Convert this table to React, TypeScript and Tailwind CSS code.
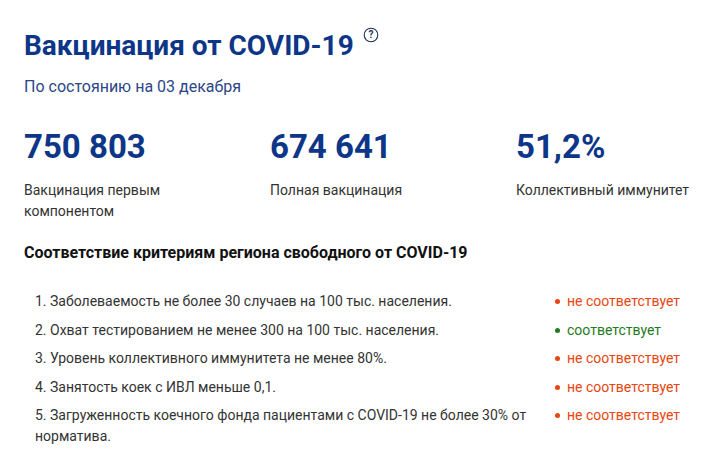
import React from "react";

const stats = [
  { value: "750 803", label: "Вакцинация первым компонентом" },
  { value: "674 641", label: "Полная вакцинация" },
  { value: "51,2%", label: "Коллективный иммунитет" },
];

const criteria = [
  { text: "1. Заболеваемость не более 30 случаев на 100 тыс. населения.", ok: false },
  { text: "2. Охват тестированием не менее 300 на 100 тыс. населения.", ok: true },
  { text: "3. Уровень коллективного иммунитета не менее 80%.", ok: false },
  { text: "4. Занятость коек с ИВЛ меньше 0,1.", ok: false },
  {
    text: "5. Загруженность коечного фонда пациентами с COVID-19 не более 30% от норматива.",
    ok: false,
  },
];

function HelpIcon() {
  return (
    <svg width="16" height="16" viewBox="0 0 16 16" className="ml-[9px] mt-[-2px] shrink-0">
      <circle cx="8" cy="8" r="6.8" fill="none" stroke="#1f2f5c" strokeWidth="1.1" />
      <text
        x="8"
        y="11.4"
        textAnchor="middle"
        fontSize="10"
        fontWeight="700"
        fill="#1f2f5c"
        fontFamily="Roboto, sans-serif"
      >
        ?
      </text>
    </svg>
  );
}

export default function App() {
  return (
    <div className="w-[721px] h-[473px] bg-white overflow-hidden pl-[24px] pt-[29px] font-['Roboto',sans-serif]">
      <div className="flex items-start">
        <h1 className="text-[28px] leading-[34px] font-bold text-[#0d3688]">Вакцинация от COVID-19</h1>
        <HelpIcon />
      </div>
      <p className="mt-[14px] text-[16px] leading-[20px] text-[#2c4688]">По состоянию на 03 декабря</p>

      <div className="mt-[30px] flex gap-[46px]">
        {stats.map((s) => (
          <div key={s.value} className="w-[200px]">
            <div className="text-[33px] leading-[40px] font-bold text-[#0d3688]">{s.value}</div>
            <div className="mt-[13px] text-[14px] leading-[21px] text-[#333]">{s.label}</div>
          </div>
        ))}
      </div>

      <h2 className="mt-[21px] text-[16px] leading-[20px] font-bold text-[#111]">
        Соответствие критериям региона свободного от COVID-19
      </h2>

      <ul className="mt-[28px] pl-[11px] flex flex-col gap-[7.5px]">
        {criteria.map((c) => (
          <li key={c.text} className="flex text-[14px] leading-[21px]">
            <span className="w-[510px] text-[#333]">{c.text}</span>
            <span
              className={
                "ml-[10px] flex items-start " + (c.ok ? "text-[#1f7a22]" : "text-[#e8450f]")
              }
            >
              <span
                className={
                  "mt-[8px] mr-[7px] w-[5px] h-[5px] rounded-full " +
                  (c.ok ? "bg-[#1f7a22]" : "bg-[#e8450f]")
                }
              />
              {c.ok ? "соответствует" : "не соответствует"}
            </span>
          </li>
        ))}
      </ul>
    </div>
  );
}
